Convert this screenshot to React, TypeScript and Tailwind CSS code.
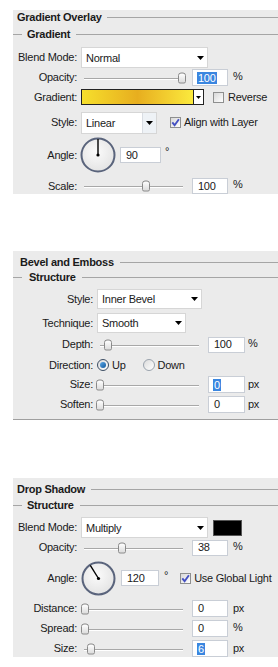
import React from "react";

function Line({ cls = "" }: { cls?: string }) {
  return <div className={`flex-1 h-px bg-[#a5a5a5] ${cls}`} />;
}

function Sub({ text, ml }: { text: string; ml: string }) {
  return (
    <div className="flex items-center h-[16px] font-bold">
      <div className="w-[9px] h-px bg-[#a5a5a5]" />
      <span className={ml}>{text}</span>
      <Line cls="ml-[6px]" />
    </div>
  );
}

function Tri() {
  return (
    <svg width="7" height="4" viewBox="0 0 7 4">
      <path d="M0 0h7L3.5 4z" fill="#000" />
    </svg>
  );
}

function Select({ w, h, text, split }: { w: string; h: string; text: string; split?: boolean }) {
  return (
    <div className={`flex items-stretch bg-white border border-[#d6d6d6] ${w} ${h}`}>
      <div className="flex-1 flex items-center pl-[4px] pt-[1px]">{text}</div>
      <div
        className={`flex items-center justify-center w-[14px] ${
          split ? "border-l border-[#d9dde3] bg-[#eef2f6]" : ""
        }`}
      >
        <Tri />
      </div>
    </div>
  );
}

function Slider({ w, pos }: { w: string; pos: number }) {
  return (
    <div className={`relative h-full ${w}`}>
      <div className="absolute left-[3px] right-[4px] top-1/2 h-[2px] border-t border-[#a8a8a8] bg-white" />
      <div
        className="absolute top-1/2 -translate-y-1/2 w-[8px] h-[11px] rounded-t-[3px] rounded-b-[2px] border border-[#8a8a8a] bg-linear-to-b from-white to-[#dcdcdc]"
        style={{ left: pos - 4 }}
      />
    </div>
  );
}

function Input({ w, h, value, selected }: { w: string; h: string; value: string; selected?: boolean }) {
  return (
    <div className={`flex items-center bg-white border border-[#c9ced6] pl-[4px] ${w} ${h}`}>
      {selected ? (
        <span className="bg-[#3a86e0] text-white px-[1px] leading-[12px]">{value}</span>
      ) : (
        <span className="px-[1px]">{value}</span>
      )}
    </div>
  );
}

function Check({ checked }: { checked?: boolean }) {
  return (
    <div className="w-[11px] h-[11px] border border-[#8e8f8f] bg-linear-to-br from-[#d8d8d8] to-white flex items-center justify-center">
      {checked && (
        <svg width="9" height="9" viewBox="0 0 9 9">
          <path d="M1.3 4.4l2.3 2.8L7.9 1.2" stroke="#4450c2" strokeWidth="1.9" fill="none" />
        </svg>
      )}
    </div>
  );
}

function Radio({ checked }: { checked?: boolean }) {
  return (
    <div
      className={`w-[12px] h-[12px] rounded-full border flex items-center justify-center bg-linear-to-br from-[#dcdcdc] to-white ${
        checked ? "border-[#3c4d63]" : "border-[#9aa3ad]"
      }`}
    >
      {checked && <div className="w-[6px] h-[6px] rounded-full bg-linear-to-br from-[#5aa8e8] to-[#125a9e]" />}
    </div>
  );
}

function Dial({ angle, size }: { angle: number; size: number }) {
  const c = size / 2;
  const r = c - 1.5;
  const a = (angle * Math.PI) / 180;
  const x = c + (r - 0.5) * Math.cos(a);
  const y = c - (r - 0.5) * Math.sin(a);
  return (
    <svg width={size} height={size} viewBox={`0 0 ${size} ${size}`}>
      <defs>
        <radialGradient id={`g${angle}`} cx="45%" cy="40%" r="65%">
          <stop offset="0%" stopColor="#fbfbfb" />
          <stop offset="100%" stopColor="#e2e2e2" />
        </radialGradient>
      </defs>
      <circle cx={c} cy={c} r={r} fill={`url(#g${angle})`} stroke="#5a647c" strokeWidth="2" />
      <line x1={c} y1={c} x2={x} y2={y} stroke="#000" strokeWidth="1.4" />
      <circle cx={c} cy={c} r="1.6" fill="#000" />
    </svg>
  );
}

function Label({ w, text }: { w: string; text: string }) {
  return <div className={`${w} text-right shrink-0`}>{text}</div>;
}

export default function App() {
  return (
    <div className="w-[278px] h-[667px] bg-white pt-[10px] text-[11px] tracking-[-0.25px] leading-none text-[#1a1a1a] font-['Liberation_Sans',Arial,sans-serif]">
      {/* Gradient Overlay */}
      <div className="ml-[13px] bg-[#ebebeb] flex flex-col">
        <div className="h-[15px] flex items-center pl-[4px] font-bold">
          <span>Gradient Overlay</span>
          <Line cls="ml-[5px]" />
        </div>
        <div className="mt-[1px]">
          <Sub text="Gradient" ml="ml-[5px]" />
        </div>
        <div className="mt-[5px] flex items-center gap-[4px] h-[21px]">
          <Label w="w-[64px]" text="Blend Mode:" />
          <Select w="w-[127px]" h="h-[21px]" text="Normal" />
        </div>
        <div className="mt-[1px] flex items-center h-[17px]">
          <Label w="w-[64px]" text="Opacity:" />
          <div className="ml-[4px] h-full">
            <Slider w="w-[106px]" pos={101} />
          </div>
          <div className="ml-[5px]">
            <Input w="w-[36px]" h="h-[17px]" value="100" selected />
          </div>
          <span className="ml-[5px] -mt-[3px]">%</span>
        </div>
        <div className="mt-[3px] flex items-center h-[16px]">
          <Label w="w-[64px]" text="Gradient:" />
          <div className="ml-[4px] flex h-[16px] border border-[#222]">
            <div className="w-[111px] h-full bg-linear-to-r from-[#f6df2c] via-[#e7ae1f] to-[#fbea3d]" />
            <div className="w-[10px] h-full bg-white border-l border-[#222] flex items-center justify-center">
              <svg width="5" height="3" viewBox="0 0 5 3">
                <path d="M0 0h5L2.5 3z" fill="#000" />
              </svg>
            </div>
          </div>
          <div className="ml-[9px]">
            <Check />
          </div>
          <span className="ml-[4px]">Reverse</span>
        </div>
        <div className="mt-[7px] flex items-center h-[21px]">
          <Label w="w-[64px]" text="Style:" />
          <div className="ml-[4px]">
            <Select w="w-[76px]" h="h-[22px]" text="Linear" split />
          </div>
          <div className="ml-[13px]">
            <Check checked />
          </div>
          <span className="ml-[3px]">Align with Layer</span>
        </div>
        <div className="mt-[4px] flex items-center h-[36px]">
          <Label w="w-[64px]" text="Angle:" />
          <div className="ml-[3px]">
            <Dial angle={90} size={36} />
          </div>
          <div className="ml-[4px]">
            <Input w="w-[41px]" h="h-[16px]" value="90" />
          </div>
          <span className="ml-[4px] -mt-[8px]">°</span>
        </div>
        <div className="mt-[5px] flex items-center h-[16px]">
          <Label w="w-[64px]" text="Scale:" />
          <div className="ml-[4px] h-full">
            <Slider w="w-[106px]" pos={65} />
          </div>
          <div className="ml-[5px]">
            <Input w="w-[36px]" h="h-[16px]" value="100" />
          </div>
          <span className="ml-[5px] -mt-[3px]">%</span>
        </div>
      </div>

      {/* Bevel and Emboss */}
      <div className="mt-[57px] ml-[13px] bg-[#ebebeb] flex flex-col pt-[3px] pb-[6px] border-b border-[#9f9f9f]">
        <div className="h-[16px] flex items-center pl-[7px] font-bold">
          <span>Bevel and Emboss</span>
          <Line cls="ml-[6px]" />
        </div>
        <div className="h-[15px] flex items-center font-bold">
          <div className="w-[9px] h-px bg-[#a5a5a5]" />
          <span className="ml-[7px]">Structure</span>
          <Line cls="ml-[6px]" />
        </div>
        <div className="mt-[4px] flex items-center h-[20px]">
          <Label w="w-[80px]" text="Style:" />
          <div className="ml-[4px]">
            <Select w="w-[105px]" h="h-[20px]" text="Inner Bevel" />
          </div>
        </div>
        <div className="mt-[4px] flex items-center h-[20px]">
          <Label w="w-[80px]" text="Technique:" />
          <div className="ml-[4px]">
            <Select w="w-[89px]" h="h-[20px]" text="Smooth" />
          </div>
        </div>
        <div className="mt-[3px] flex items-center h-[17px]">
          <Label w="w-[80px]" text="Depth:" />
          <div className="ml-[4px] h-full">
            <Slider w="w-[106px]" pos={11} />
          </div>
          <div className="ml-[5px]">
            <Input w="w-[37px]" h="h-[16px]" value="100" />
          </div>
          <span className="ml-[3px] -mt-[3px]">%</span>
        </div>
        <div className="mt-[4px] flex items-center h-[16px]">
          <Label w="w-[80px]" text="Direction:" />
          <div className="ml-[4px]">
            <Radio checked />
          </div>
          <span className="ml-[3px]">Up</span>
          <div className="ml-[17px]">
            <Radio />
          </div>
          <span className="ml-[3px]">Down</span>
        </div>
        <div className="mt-[3px] flex items-center h-[17px]">
          <Label w="w-[80px]" text="Size:" />
          <div className="ml-[4px] h-full">
            <Slider w="w-[106px]" pos={3} />
          </div>
          <div className="ml-[5px]">
            <Input w="w-[37px]" h="h-[17px]" value="0" selected />
          </div>
          <span className="ml-[3px]">px</span>
        </div>
        <div className="mt-[3px] flex items-center h-[17px]">
          <Label w="w-[80px]" text="Soften:" />
          <div className="ml-[4px] h-full">
            <Slider w="w-[106px]" pos={3} />
          </div>
          <div className="ml-[5px]">
            <Input w="w-[37px]" h="h-[17px]" value="0" />
          </div>
          <span className="ml-[3px]">px</span>
        </div>
      </div>

      {/* Drop Shadow */}
      <div className="mt-[58px] ml-[13px] bg-[#ebebeb] flex flex-col pt-[3px]">
        <div className="h-[16px] flex items-center pl-[4px] font-bold">
          <span>Drop Shadow</span>
          <Line cls="ml-[6px]" />
        </div>
        <Sub text="Structure" ml="ml-[5px]" />
        <div className="mt-[4px] flex items-center h-[21px]">
          <Label w="w-[64px]" text="Blend Mode:" />
          <div className="ml-[4px]">
            <Select w="w-[127px]" h="h-[21px]" text="Multiply" />
          </div>
          <div className="ml-[5px] w-[29px] h-[16px] bg-black border border-[#555]" />
        </div>
        <div className="mt-[1px] flex items-center h-[17px]">
          <Label w="w-[64px]" text="Opacity:" />
          <div className="ml-[4px] h-full">
            <Slider w="w-[106px]" pos={41} />
          </div>
          <div className="ml-[5px]">
            <Input w="w-[36px]" h="h-[16px]" value="38" />
          </div>
          <span className="ml-[5px] -mt-[3px]">%</span>
        </div>
        <div className="mt-[4px] flex items-center h-[36px]">
          <Label w="w-[64px]" text="Angle:" />
          <div className="ml-[4px]">
            <Dial angle={122} size={35} />
          </div>
          <div className="ml-[5px]">
            <Input w="w-[38px]" h="h-[16px]" value="120" />
          </div>
          <span className="ml-[5px] -mt-[6px]">°</span>
          <div className="ml-[12px]">
            <Check checked />
          </div>
          <span className="ml-[3px]">Use Global Light</span>
        </div>
        <div className="mt-[4px] flex items-center h-[17px]">
          <Label w="w-[64px]" text="Distance:" />
          <div className="ml-[4px] h-full">
            <Slider w="w-[106px]" pos={4} />
          </div>
          <div className="ml-[5px]">
            <Input w="w-[36px]" h="h-[17px]" value="0" />
          </div>
          <span className="ml-[5px]">px</span>
        </div>
        <div className="mt-[3px] flex items-center h-[17px]">
          <Label w="w-[64px]" text="Spread:" />
          <div className="ml-[4px] h-full">
            <Slider w="w-[106px]" pos={4} />
          </div>
          <div className="ml-[5px]">
            <Input w="w-[36px]" h="h-[17px]" value="0" />
          </div>
          <span className="ml-[5px] -mt-[3px]">%</span>
        </div>
        <div className="mt-[3px] flex items-center h-[17px]">
          <Label w="w-[64px]" text="Size:" />
          <div className="ml-[4px] h-full">
            <Slider w="w-[106px]" pos={10} />
          </div>
          <div className="ml-[5px]">
            <Input w="w-[36px]" h="h-[17px]" value="6" selected />
          </div>
          <span className="ml-[5px]">px</span>
        </div>
      </div>
    </div>
  );
}
